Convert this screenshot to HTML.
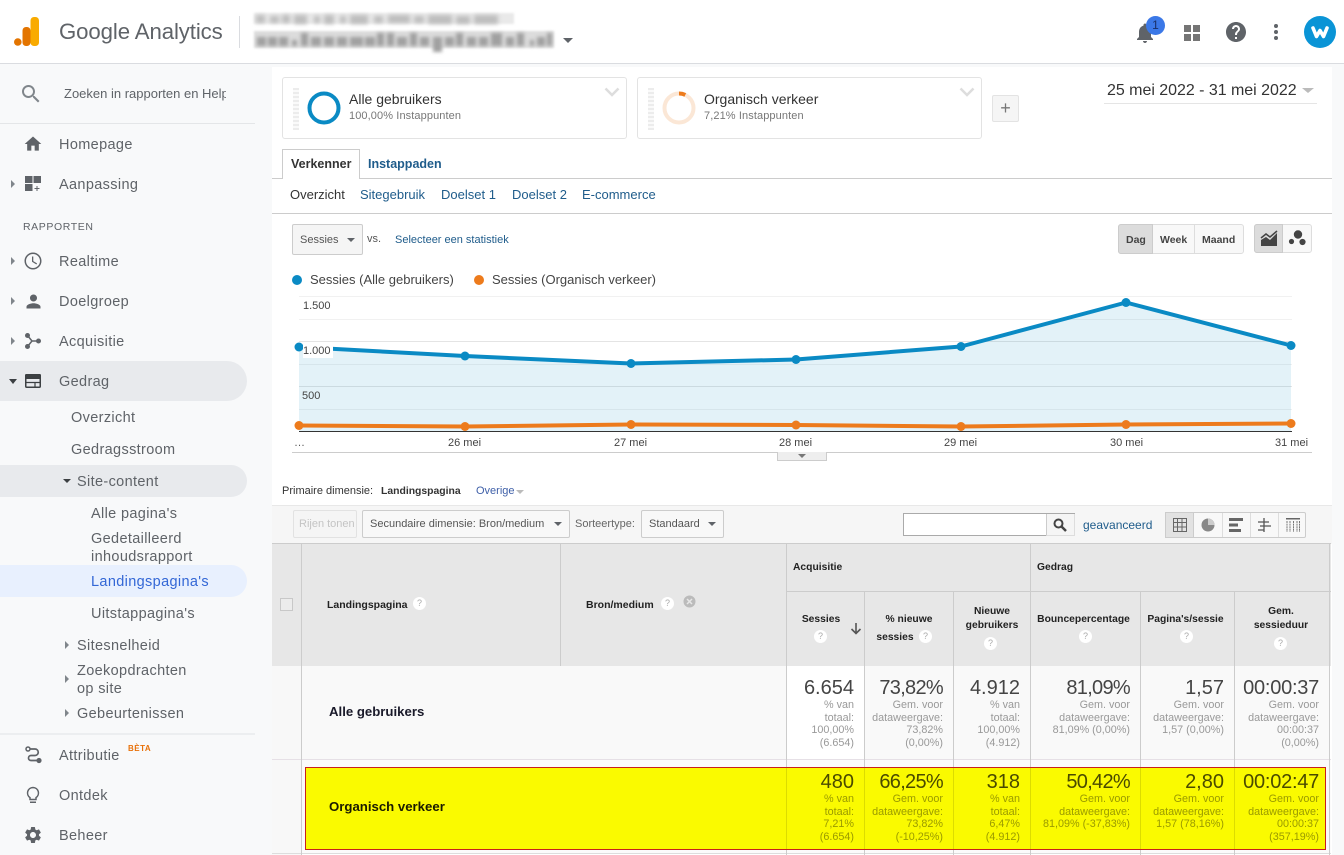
<!DOCTYPE html>
<html><head><meta charset="utf-8"><title>Google Analytics</title>
<style>
html,body{margin:0;padding:0}
body{width:1344px;height:855px;overflow:hidden;position:relative;background:#fff;font-family:"Liberation Sans",sans-serif;color:#333}
.a{position:absolute;white-space:nowrap}
.b{position:absolute;box-sizing:border-box}
.n{position:absolute;white-space:nowrap;font-size:14.5px;color:#5f6368;line-height:18px;letter-spacing:.35px;margin-top:1px}
.i{position:absolute;fill:#5f6368}
.tri{position:absolute;width:0;height:0;border-top:4px solid transparent;border-bottom:4px solid transparent;border-left:4px solid #80868b}
.dn{position:absolute;width:0;height:0;border-left:4px solid transparent;border-right:4px solid transparent;border-top:4px solid #5f6368}
.btn{position:absolute;box-sizing:border-box;border:1px solid #ccc;border-radius:2px;background:#f5f5f5;font-size:11px;color:#444;line-height:25px}
.th{position:absolute;font-size:10.3px;font-weight:bold;color:#222;text-align:center;line-height:18px}
.q{display:inline-block;width:13px;height:13px;border-radius:50%;background:#fff;color:#aaa;font-size:9px;line-height:13px;text-align:center;font-weight:normal;vertical-align:middle}
.v{position:absolute;text-align:right;font-size:20px;line-height:22px;color:#444;white-space:nowrap}
.p{letter-spacing:-.7px}
.s{position:absolute;text-align:right;font-size:10.8px;line-height:12.6px;color:#999;white-space:nowrap}
.y .s{color:#9a9a00}
.y .v{color:#4a4a00}
.vl{position:absolute;width:1px;background:#ccc}
</style></head><body>

<!-- sidebar & page backgrounds -->
<div class="b" style="left:0;top:64px;width:272px;height:791px;background:#f8f9fa"></div>
<div class="b" style="left:1332px;top:64px;width:12px;height:791px;background:#f8f9fa"></div>
<div class="b" style="left:272px;top:64px;width:1060px;height:3px;background:#f8f9fa"></div>

<!-- header -->
<div class="b" style="left:0;top:63px;width:1344px;height:1px;background:#dadce0"></div>
<svg class="b" style="left:13px;top:16px" width="28" height="32" viewBox="0 0 28 32"><rect x="17.5" y="1" width="8.5" height="29" rx="3.5" fill="#f9ab00"/><rect x="9.5" y="11" width="8" height="19" rx="3.5" fill="#e37400"/><circle cx="4.8" cy="26" r="3.8" fill="#e37400"/></svg>
<div class="a" style="left:59px;top:18px;font-size:22.2px;line-height:28px;color:#5f6368;letter-spacing:-.1px">Google Analytics</div>
<div class="b" style="left:239px;top:16px;width:1px;height:32px;background:#dadce0"></div>
<div class="b" style="left:254px;top:13px;width:260px;height:11px;background:#e9e9e9;filter:blur(1px)"></div>
<svg class="b" style="left:254px;top:10px;filter:blur(2px)" width="266" height="18"><g fill="#bdbdbd"><rect x="2" y="5" width="9" height="8"/><rect x="16" y="6" width="9" height="7"/><rect x="28" y="5" width="8" height="8"/><rect x="40" y="5" width="13" height="9"/><rect x="60" y="6" width="6" height="7"/><rect x="70" y="5" width="10" height="9"/><rect x="86" y="6" width="6" height="7"/><rect x="96" y="5" width="18" height="9"/><rect x="120" y="6" width="9" height="7"/><rect x="134" y="5" width="22" height="8"/><rect x="160" y="6" width="10" height="7"/><rect x="174" y="5" width="24" height="9"/><rect x="202" y="6" width="14" height="8"/><rect x="220" y="5" width="24" height="9"/></g></svg>
<div class="b" style="left:254px;top:31px;width:300px;height:17px;background:#dcdcdc;filter:blur(1px)"></div>
<svg class="b" style="left:254px;top:26px;filter:blur(1.8px)" width="306" height="28"><g fill="#a0a0a0"><rect x="3" y="11" width="9" height="9"/><rect x="14" y="11" width="9" height="9"/><rect x="25" y="11" width="9" height="9"/><rect x="38" y="14" width="5" height="6"/><rect x="47" y="7" width="7" height="13"/><rect x="57" y="11" width="10" height="9"/><rect x="70" y="11" width="10" height="9"/><rect x="83" y="11" width="10" height="9"/><rect x="96" y="11" width="13" height="9"/><rect x="111" y="11" width="10" height="9"/><rect x="123" y="7" width="7" height="13"/><rect x="133" y="7" width="7" height="13"/><rect x="143" y="11" width="10" height="9"/><rect x="156" y="7" width="7" height="13"/><rect x="166" y="11" width="9" height="9"/><rect x="179" y="11" width="9" height="15"/><rect x="191" y="11" width="9" height="9"/><rect x="202" y="7" width="7" height="13"/><rect x="213" y="11" width="9" height="9"/><rect x="225" y="11" width="9" height="9"/><rect x="237" y="7" width="11" height="13"/><rect x="252" y="11" width="8" height="9"/><rect x="263" y="7" width="7" height="13"/><rect x="276" y="14" width="4" height="6"/><rect x="283" y="11" width="8" height="9"/><rect x="293" y="7" width="5" height="13"/></g></svg>
<div class="dn" style="left:563px;top:38px;border-left-width:5px;border-right-width:5px;border-top-width:5px"></div>

<svg class="i" style="left:1133px;top:21px" width="24" height="24" viewBox="0 0 24 24"><path d="M12 22c1.1 0 2-.9 2-2h-4c0 1.1.9 2 2 2zm6-6v-5c0-3.07-1.63-5.64-4.5-6.32V4c0-.83-.67-1.5-1.5-1.5s-1.5.67-1.5 1.5v.68C7.64 5.36 6 7.92 6 11v5l-2 2v1h16v-1l-2-2z"/></svg>
<div class="a" style="left:1146px;top:16px;width:19px;height:19px;border-radius:50%;background:#3b78e7;color:#1a2f66;font-size:12px;line-height:18px;text-align:center">1</div>
<svg class="i" style="left:1183px;top:24px;fill:#757575" width="18" height="18" viewBox="0 0 18 18"><rect x="1" y="1" width="7" height="7"/><rect x="10" y="1" width="7" height="7"/><rect x="1" y="10" width="7" height="7"/><rect x="10" y="10" width="7" height="7"/></svg>
<svg class="i" style="left:1224px;top:20px" width="24" height="24" viewBox="0 0 24 24"><path d="M12 2C6.48 2 2 6.48 2 12s4.48 10 10 10 10-4.48 10-10S17.52 2 12 2zm1 17h-2v-2h2v2zm2.07-7.75l-.9.92C13.45 12.9 13 13.5 13 15h-2v-.5c0-1.1.45-2.1 1.17-2.83l1.24-1.26c.37-.36.59-.86.59-1.41 0-1.1-.9-2-2-2s-2 .9-2 2H8c0-2.21 1.79-4 4-4s4 1.79 4 4c0 .88-.36 1.68-.93 2.25z"/></svg>
<svg class="i" style="left:1272px;top:23px" width="8" height="18" viewBox="0 0 8 18"><circle cx="4" cy="3" r="2"/><circle cx="4" cy="9" r="2"/><circle cx="4" cy="15" r="2"/></svg>
<div class="a" style="left:1304px;top:16px;width:32px;height:32px;border-radius:50%;background:#0a94d6"></div>
<svg class="b" style="left:1304px;top:16px" width="32" height="32" viewBox="0 0 32 32"><path d="M9 12l3.500 8.500L16 14.500l3.500 6L23 12" fill="none" stroke="#fff" stroke-width="3.600" stroke-linejoin="round" stroke-linecap="round"/></svg>

<!-- sidebar -->
<svg class="i" style="left:19px;top:82px;fill:#80868b" width="24" height="24" viewBox="0 0 24 24"><path d="M15.5 14h-.79l-.28-.27C15.41 12.59 16 11.11 16 9.5 16 5.91 13.09 3 9.5 3S3 5.91 3 9.500 5.910 16 9.500 16c1.610 0 3.090-.59 4.230-1.570l.27.28v.79l5 4.990L20.490 19l-4.990-5zm-6 0C7.010 14 5 11.990 5 9.500S7.010 5 9.500 5 14 7.010 14 9.500 11.990 14 9.500 14z"/></svg>
<div class="a" style="left:64px;top:85px;width:162px;overflow:hidden;font-size:13px;line-height:18px;color:#5f6368">Zoeken in rapporten en Help</div>
<div class="b" style="left:0;top:123px;width:255px;height:1px;background:#e4e6e8"></div>

<svg class="i" style="left:23px;top:134px" width="20" height="20" viewBox="0 0 24 24"><path d="M10 20v-6h4v6h5v-8h3L12 3 2 12h3v8z"/></svg>
<div class="n" style="left:59px;top:135px">Homepage</div>
<div class="tri" style="left:11px;top:180px"></div>
<svg class="i" style="left:25px;top:176px" width="16" height="16" viewBox="0 0 16 16"><rect width="7.500" height="7"/><rect x="8.500" width="7.500" height="7"/><rect y="8" width="7.500" height="7"/><path d="M11.500 10h1v2h2v1h-2v2h-1v-2h-2v-1h2z"/></svg>
<div class="n" style="left:59px;top:175px">Aanpassing</div>
<div class="a" style="left:23px;top:220px;font-size:10.500px;line-height:14px;color:#5f6368;letter-spacing:.6px">RAPPORTEN</div>

<div class="tri" style="left:11px;top:257px"></div>
<svg class="i" style="left:21px;top:249px" width="24" height="24" viewBox="0 0 24 24"><path d="M11.990 3.500C7.300 3.500 3.500 7.310 3.500 12s3.800 8.500 8.490 8.500c4.700 0 8.510-3.810 8.510-8.500s-3.810-8.500-8.510-8.500zM12 19c-3.870 0-7-3.130-7-7s3.130-7 7-7 7 3.130 7 7-3.130 7-7 7z"/><path d="M12.300 7.500H11v5.300l4.400 2.650.65-1.050-3.750-2.230z"/></svg>
<div class="n" style="left:59px;top:252px">Realtime</div>
<div class="tri" style="left:11px;top:297px"></div>
<svg class="i" style="left:22.500px;top:290.500px" width="21" height="21" viewBox="0 0 24 24"><path d="M12 12c2.210 0 4-1.790 4-4s-1.790-4-4-4-4 1.790-4 4 1.790 4 4 4zm0 2c-2.670 0-8 1.340-8 4v2h16v-2c0-2.660-5.330-4-8-4z"/></svg>
<div class="n" style="left:59px;top:292px">Doelgroep</div>
<div class="tri" style="left:11px;top:337px"></div>
<svg class="i" style="left:25px;top:333px" width="16" height="16" viewBox="0 0 16 16"><circle cx="2.500" cy="2.500" r="2.500"/><circle cx="2.500" cy="13.500" r="2.500"/><circle cx="13.500" cy="8" r="2.500"/><path d="M2.500 2.500L7 8l-4.500 5.500M7 8h6.500" fill="none" stroke="#5f6368" stroke-width="1.500"/></svg>
<div class="n" style="left:59px;top:332px">Acquisitie</div>

<div class="b" style="left:0;top:361px;width:247px;height:40px;background:#e8eaed;border-radius:0 20px 20px 0"></div>
<div class="dn" style="left:9px;top:379px;border-left-width:4.500px;border-right-width:4.500px;border-top-width:5px;border-top-color:#3c4043"></div>
<svg class="b" style="left:25px;top:374px" width="16" height="14" viewBox="0 0 16 14"><rect x=".75" y=".75" width="14.500" height="12.500" rx="1" fill="none" stroke="#3c4043" stroke-width="1.500"/><rect x="0" y="0" width="16" height="5" rx="1.500" fill="#3c4043"/><path d="M1 8.500h14M10 8.500V13" stroke="#3c4043" stroke-width="1.200" fill="none"/></svg>
<div class="n" style="left:59px;top:372px">Gedrag</div>
<div class="n" style="left:71px;top:408px">Overzicht</div>
<div class="n" style="left:71px;top:440px">Gedragsstroom</div>
<div class="b" style="left:0;top:465px;width:247px;height:32px;background:#e8eaed;border-radius:0 16px 16px 0"></div>
<div class="dn" style="left:63px;top:479px;border-top-color:#3c4043"></div>
<div class="n" style="left:77px;top:472px">Site-content</div>
<div class="n" style="left:91px;top:504px">Alle pagina's</div>
<div class="n" style="left:91px;top:529px">Gedetailleerd</div>
<div class="n" style="left:91px;top:547px">inhoudsrapport</div>
<div class="b" style="left:0;top:565px;width:247px;height:32px;background:#e8f0fe;border-radius:0 16px 16px 0"></div>
<div class="n" style="left:91px;top:572px;color:#3367d6">Landingspagina's</div>
<div class="n" style="left:91px;top:604px">Uitstappagina's</div>
<div class="tri" style="left:65px;top:641px"></div>
<div class="n" style="left:77px;top:636px">Sitesnelheid</div>
<div class="tri" style="left:65px;top:675px"></div>
<div class="n" style="left:77px;top:661px">Zoekopdrachten</div>
<div class="n" style="left:77px;top:679px">op site</div>
<div class="tri" style="left:65px;top:709px"></div>
<div class="n" style="left:77px;top:704px">Gebeurtenissen</div>
<div class="b" style="left:0;top:733px;width:255px;height:2px;background:#eceef0"></div>
<svg class="b" style="left:25px;top:746px" width="17" height="18" viewBox="0 0 17 18"><circle cx="3" cy="3" r="2" fill="none" stroke="#5f6368" stroke-width="1.500"/><circle cx="14" cy="14.500" r="2.600" fill="#5f6368"/><path d="M5 3h5a3 3 0 0 1 0 6.500H6a2.500 2.500 0 0 0 0 5h6" fill="none" stroke="#5f6368" stroke-width="1.700"/></svg>
<div class="n" style="left:59px;top:746px">Attributie</div>
<div class="a" style="left:128px;top:743px;font-size:8px;line-height:12px;font-weight:bold;color:#e8710a;letter-spacing:.5px">BÈTA</div>
<svg class="b" style="left:25px;top:786px" width="16" height="20" viewBox="0 0 16 20"><path d="M8 1.500a5.500 5.500 0 0 0-3 10.100V13.500h6v-1.900A5.500 5.500 0 0 0 8 1.500z" fill="none" stroke="#5f6368" stroke-width="1.500"/><rect x="5" y="15.500" width="6" height="1.500" fill="#5f6368"/></svg>
<div class="n" style="left:59px;top:786px">Ontdek</div>
<svg class="i" style="left:23px;top:825px" width="20" height="20" viewBox="0 0 24 24"><path d="M19.140 12.940c.04-.3.060-.61.060-.94 0-.32-.02-.64-.07-.94l2.030-1.580c.18-.14.230-.41.120-.61l-1.920-3.320c-.12-.22-.37-.29-.59-.22l-2.390.960c-.5-.38-1.030-.7-1.620-.94l-.36-2.540c-.04-.24-.24-.41-.48-.41h-3.840c-.24 0-.43.170-.47.410l-.36 2.540c-.59.240-1.130.570-1.620.940l-2.390-.96c-.22-.08-.47 0-.59.220L2.740 8.870c-.12.210-.08.470.120.610l2.030 1.580c-.05.300-.09.630-.09.940s.020.640.070.940l-2.030 1.580c-.18.140-.23.410-.12.610l1.920 3.320c.12.220.370.290.590.220l2.390-.96c.5.380 1.030.7 1.620.94l.36 2.540c.05.240.24.410.48.410h3.840c.24 0 .44-.17.47-.41l.36-2.540c.59-.24 1.130-.56 1.620-.94l2.390.96c.22.080.47 0 .59-.22l1.920-3.320c.12-.22.070-.47-.12-.61l-2.010-1.580zM12 15.600c-1.980 0-3.600-1.620-3.600-3.600s1.620-3.600 3.600-3.600 3.600 1.620 3.600 3.600-1.620 3.600-3.600 3.600z"/></svg>
<div class="n" style="left:59px;top:826px">Beheer</div>

<!-- segment cards -->
<div class="b" style="left:282px;top:77px;width:345px;height:62px;border:1px solid #e3e3e3;border-radius:3px;background:#fff"></div>
<div class="b" style="left:293px;top:88px;width:6px;height:42px;background:repeating-linear-gradient(#ececec 0 2px,#fafafa 2px 4px)"></div>
<svg class="b" style="left:307px;top:91px" width="34" height="34"><circle cx="17" cy="17" r="14.500" fill="none" stroke="#0a8ac4" stroke-width="4"/></svg>
<div class="a" style="left:349px;top:90px;font-size:14px;line-height:18px;color:#333">Alle gebruikers</div>
<div class="a" style="left:349px;top:109px;font-size:11px;line-height:15px;color:#777;letter-spacing:.1px">100,00% Instappunten</div>
<svg class="b" style="left:604px;top:87px" width="16" height="11"><path d="M1.500 1.500L8 8l6.500-6.500" fill="none" stroke="#ddd" stroke-width="2.500"/></svg>

<div class="b" style="left:637px;top:77px;width:345px;height:62px;border:1px solid #e3e3e3;border-radius:3px;background:#fff"></div>
<div class="b" style="left:648px;top:88px;width:6px;height:42px;background:repeating-linear-gradient(#ececec 0 2px,#fafafa 2px 4px)"></div>
<svg class="b" style="left:662px;top:91px" width="34" height="34"><circle cx="17" cy="17" r="14.500" fill="none" stroke="#fbe7d6" stroke-width="4"/><path d="M17 2.500A14.500 14.500 0 0 1 23.300 3.900" fill="none" stroke="#ed7b1c" stroke-width="4"/></svg>
<div class="a" style="left:704px;top:90px;font-size:14px;line-height:18px;color:#333">Organisch verkeer</div>
<div class="a" style="left:704px;top:109px;font-size:11px;line-height:15px;color:#777;letter-spacing:.1px">7,21% Instappunten</div>
<svg class="b" style="left:959px;top:87px" width="16" height="11"><path d="M1.500 1.500L8 8l6.500-6.500" fill="none" stroke="#ddd" stroke-width="2.500"/></svg>
<div class="b" style="left:992px;top:95px;width:27px;height:27px;border:1px solid #e3e3e3;border-radius:2px;background:#f5f5f5;color:#777;font-size:18px;line-height:25px;text-align:center">+</div>

<div class="a" style="left:1107px;top:81px;font-size:16px;line-height:20px;color:#333;letter-spacing:-.03px">25 mei 2022 - 31 mei 2022</div>
<div class="dn" style="left:1302px;top:88px;border-left-width:6px;border-right-width:6px;border-top-width:5px;border-top-color:#bbb"></div>
<div class="b" style="left:1104px;top:103px;width:213px;height:1px;background:#e5e5e5"></div>

<!-- tabs -->
<div class="b" style="left:272px;top:178px;width:1060px;height:1px;background:#ccc"></div>
<div class="b" style="left:282px;top:149px;width:78px;height:30px;border:1px solid #ccc;border-bottom:0;background:#fff"></div>
<div class="a" style="left:291px;top:155px;font-size:12.500px;line-height:18px;font-weight:bold;color:#333">Verkenner</div>
<div class="a" style="left:368px;top:155px;font-size:12.500px;line-height:18px;font-weight:bold;color:#1f5c8b">Instappaden</div>
<div class="a" style="left:290px;top:186px;font-size:13px;line-height:18px;color:#333">Overzicht</div>
<div class="a" style="left:360px;top:186px;font-size:13px;line-height:18px;color:#1f5c8b">Sitegebruik</div>
<div class="a" style="left:441px;top:186px;font-size:13px;line-height:18px;color:#1f5c8b">Doelset 1</div>
<div class="a" style="left:512px;top:186px;font-size:13px;line-height:18px;color:#1f5c8b">Doelset 2</div>
<div class="a" style="left:582px;top:186px;font-size:13px;line-height:18px;color:#1f5c8b">E-commerce</div>
<div class="b" style="left:272px;top:213px;width:1060px;height:1px;background:#ccc"></div>

<!-- chart controls -->
<div class="btn" style="left:292px;top:224px;width:71px;height:31px;line-height:30px;padding-left:7px;color:#555">Sessies</div>
<div class="dn" style="left:347px;top:238px"></div>
<div class="a" style="left:367px;top:231px;font-size:11px;line-height:16px;color:#555">vs.</div>
<div class="a" style="left:395px;top:232px;font-size:11px;line-height:16px;color:#1f5c8b">Selecteer een statistiek</div>

<div class="b" style="left:1118px;top:224px;width:126px;height:30px;border:1px solid #ddd;border-radius:3px;background:#f8f8f8"></div>
<div class="b" style="left:1118px;top:224px;width:35px;height:30px;border-radius:3px 0 0 3px;background:#dcdcdc;border:1px solid #ccc"></div>
<div class="b" style="left:1194px;top:224px;width:1px;height:30px;background:#ddd"></div>
<div class="a" style="left:1126px;top:232px;font-size:10.500px;line-height:16px;font-weight:bold;color:#444">Dag</div>
<div class="a" style="left:1160px;top:232px;font-size:10.500px;line-height:16px;font-weight:bold;color:#444">Week</div>
<div class="a" style="left:1202px;top:232px;font-size:10.500px;line-height:16px;font-weight:bold;color:#444">Maand</div>
<div class="b" style="left:1254px;top:224px;width:58px;height:29px;border:1px solid #ddd;border-radius:3px;background:#f8f8f8"></div>
<div class="b" style="left:1254px;top:224px;width:29px;height:29px;border-radius:3px 0 0 3px;background:#dcdcdc;border:1px solid #ccc"></div>
<svg class="b" style="left:1260px;top:230px" width="18" height="17" viewBox="0 0 18 17"><path d="M1 16V10l5-3 4 3 7-7v13z" fill="#444"/><path d="M1 8l5-4 4 3 7-6" fill="none" stroke="#444" stroke-width="1.500"/></svg>
<svg class="b" style="left:1288px;top:229px" width="20" height="18"><circle cx="10" cy="5.500" r="4.200" fill="#444"/><circle cx="3.500" cy="12.500" r="2.600" fill="#444"/><circle cx="14.500" cy="13" r="3.100" fill="#444"/></svg>

<!-- legend -->
<div class="a" style="left:292px;top:275px;width:10px;height:10px;border-radius:50%;background:#0a8ac4"></div>
<div class="a" style="left:310px;top:271px;font-size:13px;line-height:18px;color:#444">Sessies (Alle gebruikers)</div>
<div class="a" style="left:474px;top:275px;width:10px;height:10px;border-radius:50%;background:#ed7b1c"></div>
<div class="a" style="left:492px;top:271px;font-size:13px;line-height:18px;color:#444">Sessies (Organisch verkeer)</div>

<!-- chart -->
<svg class="b" style="left:272px;top:290px" width="1060" height="175" viewBox="272 290 1060 175">
<g stroke-width="1"><path d="M299 296.500H1292M299 319.500H1292M299 364.500H1292M299 409.500H1292" stroke="#f1f1f1"/><path d="M299 341.500H1292M299 386.500H1292" stroke="#e4e4e4"/></g>
<path d="M299 347L465 356 631 363.500 796 359.500 961 346.500 1126 302.500 1291 345.500V431H299z" fill="#0a8ac4" fill-opacity=".115"/>
<path d="M299 347L465 356 631 363.500 796 359.500 961 346.500 1126 302.500 1291 345.500" fill="none" stroke="#0a8ac4" stroke-width="4" stroke-linejoin="round"/>
<g fill="#0a8ac4"><circle cx="299" cy="347" r="4.500"/><circle cx="465" cy="356" r="4.500"/><circle cx="631" cy="363.500" r="4.500"/><circle cx="796" cy="359.500" r="4.500"/><circle cx="961" cy="346.500" r="4.500"/><circle cx="1126" cy="302.500" r="4.500"/><circle cx="1291" cy="345.500" r="4.500"/></g>
<path d="M299 425.500L465 426.500 631 424.500 796 425 961 426.500 1126 424.500 1291 423.500" fill="none" stroke="#ed7b1c" stroke-width="4" stroke-linejoin="round"/>
<g fill="#ed7b1c"><circle cx="299" cy="425.500" r="4.500"/><circle cx="465" cy="426.500" r="4.500"/><circle cx="631" cy="424.500" r="4.500"/><circle cx="796" cy="425" r="4.500"/><circle cx="961" cy="426.500" r="4.500"/><circle cx="1126" cy="424.500" r="4.500"/><circle cx="1291" cy="423.500" r="4.500"/></g>
<path d="M299 431.500H1292" stroke="#333" stroke-width="1"/>
<path d="M292 452.500H1312" stroke="#ccc" stroke-width="1"/>
</svg>
<div class="a" style="left:303px;top:299px;font-size:11px;line-height:14px;color:#444;background:#fff">1.500</div>
<div class="a" style="left:303px;top:344px;font-size:11px;line-height:14px;color:#444;background:#fff;padding-right:2px">1.000</div>
<div class="a" style="left:302px;top:389px;font-size:11px;line-height:14px;color:#444">500</div>
<div class="a" style="left:294px;top:436px;font-size:11px;line-height:14px;color:#555">…</div>
<div class="a" style="left:448px;top:436px;font-size:11px;line-height:14px;color:#444">26 mei</div>
<div class="a" style="left:614px;top:436px;font-size:11px;line-height:14px;color:#444">27 mei</div>
<div class="a" style="left:779px;top:436px;font-size:11px;line-height:14px;color:#444">28 mei</div>
<div class="a" style="left:944px;top:436px;font-size:11px;line-height:14px;color:#444">29 mei</div>
<div class="a" style="left:1110px;top:436px;font-size:11px;line-height:14px;color:#444">30 mei</div>
<div class="a" style="left:1275px;top:436px;font-size:11px;line-height:14px;color:#444">31 mei</div>
<div class="b" style="left:777px;top:452px;width:50px;height:9px;background:#eee;border:1px solid #ccc;border-top:0"></div>
<div class="dn" style="left:798px;top:454px;border-left-width:4px;border-right-width:4px;border-top-color:#777"></div>

<!-- primary dimension -->
<div class="a" style="left:282px;top:483px;font-size:11px;line-height:16px;color:#333">Primaire dimensie:</div>
<div class="a" style="left:381px;top:484px;font-size:10.400px;line-height:16px;font-weight:bold;color:#333">Landingspagina</div>
<div class="a" style="left:476px;top:483px;font-size:11px;line-height:16px;color:#3e5fa8">Overige</div>
<div class="dn" style="left:516px;top:490px;border-top-color:#bbb"></div>

<!-- toolbar -->
<div class="b" style="left:272px;top:505px;width:1060px;height:39px;background:#f6f6f6;border-top:1px solid #e8e8e8"></div>
<div class="btn" style="left:293px;top:510px;width:64px;height:28px;color:#c4c4c4;border-color:#e2e2e2;padding-left:5px;line-height:27px">Rijen tonen</div>
<div class="btn" style="left:362px;top:510px;width:208px;height:28px;padding-left:7px;line-height:26px;background:#f8f8f8;color:#555">Secundaire dimensie: Bron/medium</div>
<div class="dn" style="left:554px;top:522px"></div>
<div class="a" style="left:575px;top:517px;font-size:11px;line-height:15px;color:#666">Sorteertype:</div>
<div class="btn" style="left:641px;top:510px;width:83px;height:28px;padding-left:7px;line-height:26px;background:#f8f8f8;color:#555">Standaard</div>
<div class="dn" style="left:708px;top:522px"></div>
<div class="b" style="left:903px;top:513px;width:172px;height:23px;border:1px solid #aaa;background:#fff"></div>
<div class="b" style="left:1046px;top:514px;width:29px;height:22px;background:#f5f5f5;border-left:1px solid #ccc;border-right:1px solid #ddd;border-bottom:1px solid #ddd"></div>
<svg class="b" style="left:1052px;top:517px" width="16" height="16"><circle cx="6.500" cy="6.500" r="4" fill="none" stroke="#444" stroke-width="2"/><path d="M9.500 9.500L14 14" stroke="#444" stroke-width="2.500"/></svg>
<div class="a" style="left:1083px;top:517px;font-size:12px;line-height:16px;color:#1f5c8b">geavanceerd</div>
<div class="b" style="left:1165px;top:512px;width:141px;height:26px;border:1px solid #ccc;border-radius:2px;background:#f8f8f8"></div>
<div class="b" style="left:1165px;top:512px;width:29px;height:26px;background:#e2e2e2;border:1px solid #ccc"></div>
<div class="b" style="left:1222px;top:513px;width:1px;height:24px;background:#ddd"></div>
<div class="b" style="left:1250px;top:513px;width:1px;height:24px;background:#ddd"></div>
<div class="b" style="left:1278px;top:513px;width:1px;height:24px;background:#ddd"></div>
<svg class="b" style="left:1173px;top:518px" width="14" height="14"><path d="M.5.500h13v13H.5zM.5 4.500h13M.5 9h13M4.500.500v13M9 .500v13" fill="none" stroke="#666"/></svg>
<svg class="b" style="left:1201px;top:518px" width="14" height="14"><circle cx="7" cy="7" r="6.500" fill="#888"/><path d="M7 7V.5A6.500 6.500 0 0 1 13.500 7z" fill="#ccc"/></svg>
<svg class="b" style="left:1229px;top:518px" width="14" height="14"><path d="M0 0h14v3H0zM0 5.500h9v3H0zM0 11h12v3H0z" fill="#666"/></svg>
<svg class="b" style="left:1257px;top:518px" width="14" height="14"><path d="M7 0v14M1 4h11M3 8h11M1 12h6" fill="none" stroke="#555" stroke-width="1.300"/></svg>
<svg class="b" style="left:1285px;top:518px" width="16" height="14"><path d="M1 0h14v1.500H1z" fill="#666"/><path d="M2 3v11M5 3v11M8.500 3v11M12 3v11M14.500 3v11" stroke="#777" stroke-dasharray="2 .6"/></svg>

<!-- table backgrounds -->
<div class="b" style="left:272px;top:543px;width:1059px;height:123px;background:#e7e7e7;border-top:1px solid #ccc"></div>
<div class="b" style="left:272px;top:666px;width:29px;height:189px;background:#f8f8f8"></div>
<div class="b" style="left:302px;top:666px;width:484px;height:93px;background:#f9f9f9"></div>
<div class="b" style="left:865px;top:666px;width:465px;height:93px;background:#f9f9f9"></div>
<div class="b" style="left:272px;top:759px;width:1059px;height:1px;background:#e6e0e6"></div>
<div class="b" style="left:302px;top:760px;width:1029px;height:94px;background:#fbfbfb"></div>
<div class="b" style="left:272px;top:853px;width:1059px;height:1px;background:#ddd"></div>

<!-- table lines -->
<div class="vl" style="left:301px;top:544px;height:311px"></div>
<div class="vl" style="left:560px;top:544px;height:122px"></div>
<div class="vl" style="left:786px;top:544px;height:311px"></div>
<div class="vl" style="left:864px;top:592px;height:263px"></div>
<div class="vl" style="left:953px;top:592px;height:263px"></div>
<div class="vl" style="left:1030px;top:544px;height:311px"></div>
<div class="vl" style="left:1140px;top:592px;height:263px"></div>
<div class="vl" style="left:1234px;top:592px;height:263px"></div>
<div class="vl" style="left:1329px;top:544px;height:311px"></div>
<div class="b" style="left:786px;top:591px;width:545px;height:1px;background:#ccc"></div>

<div class="b" style="left:280px;top:598px;width:13px;height:13px;border:1px solid #c8c8c8;background:#ececec"></div>
<div class="a" style="left:327px;top:597px;font-size:10.500px;line-height:16px;font-weight:bold;color:#222">Landingspagina</div>
<div class="q a" style="left:413px;top:597px">?</div>
<div class="a" style="left:586px;top:597px;font-size:10.500px;line-height:16px;font-weight:bold;color:#222">Bron/medium</div>
<div class="q a" style="left:661px;top:597px">?</div>
<svg class="b" style="left:683px;top:595px" width="13" height="13"><circle cx="6.500" cy="6.500" r="6" fill="#bbb"/><path d="M4 4l5 5M9 4l-5 5" stroke="#e7e7e7" stroke-width="1.500"/></svg>

<div class="a" style="left:793px;top:560px;font-size:10.300px;line-height:16px;font-weight:bold;color:#222">Acquisitie</div>
<div class="a" style="left:1037px;top:560px;font-size:10.300px;line-height:16px;font-weight:bold;color:#222">Gedrag</div>

<div class="th" style="left:787px;width:68px;top:611px">Sessies</div>
<div class="q a" style="left:814px;top:630px">?</div>
<svg class="b" style="left:850px;top:622px" width="12" height="13"><path d="M6 1v10M1.500 7L6 11.500 10.500 7" fill="none" stroke="#555" stroke-width="1.600"/></svg>
<div class="th" style="left:865px;width:88px;top:611px">% nieuwe</div>
<div class="th" style="left:865px;width:60px;top:629px">sessies</div>
<div class="q a" style="left:919px;top:630px">?</div>
<div class="th" style="left:954px;width:76px;top:605px;line-height:13.500px">Nieuwe<br>gebruikers</div>
<div class="q a" style="left:984px;top:637px">?</div>
<div class="th" style="left:1031px;width:105px;top:611px">Bouncepercentage</div>
<div class="q a" style="left:1079px;top:630px">?</div>
<div class="th" style="left:1141px;width:89px;top:611px">Pagina's/sessie</div>
<div class="q a" style="left:1180px;top:630px">?</div>
<div class="th" style="left:1235px;width:92px;top:605px;line-height:13.500px">Gem.<br>sessieduur</div>
<div class="q a" style="left:1274px;top:637px">?</div>

<!-- rows -->
<div class="a" style="left:329px;top:703px;font-size:13.200px;line-height:18px;font-weight:bold;color:#1a1a2a">Alle gebruikers</div>

<div class="v" style="right:490px;top:677px">6.654</div>
<div class="s" style="right:490px;top:699px">% van<br>totaal:<br>100,00%<br>(6.654)</div>
<div class="v p" style="right:401px;top:677px">73,82%</div>
<div class="s" style="right:401px;top:699px">Gem. voor<br>dataweergave:<br>73,82%<br>(0,00%)</div>
<div class="v" style="right:324px;top:677px">4.912</div>
<div class="s" style="right:324px;top:699px">% van<br>totaal:<br>100,00%<br>(4.912)</div>
<div class="v p" style="right:214px;top:677px">81,09%</div>
<div class="s" style="right:214px;top:699px">Gem. voor<br>dataweergave:<br>81,09% (0,00%)</div>
<div class="v" style="right:120px;top:677px">1,57</div>
<div class="s" style="right:120px;top:699px">Gem. voor<br>dataweergave:<br>1,57 (0,00%)</div>
<div class="v" style="right:25px;top:677px;letter-spacing:-.25px">00:00:37</div>
<div class="s" style="right:25px;top:699px">Gem. voor<br>dataweergave:<br>00:00:37<br>(0,00%)</div>

<!-- highlighted row -->
<div class="b" style="left:305px;top:767px;width:1021px;height:83px;background:#fafa00;border:1px solid #c8201c"></div>
<div class="vl" style="left:786px;top:768px;height:81px;background:#dcdc00"></div>
<div class="vl" style="left:864px;top:768px;height:81px;background:#dcdc00"></div>
<div class="vl" style="left:953px;top:768px;height:81px;background:#dcdc00"></div>
<div class="vl" style="left:1030px;top:768px;height:81px;background:#dcdc00"></div>
<div class="vl" style="left:1140px;top:768px;height:81px;background:#dcdc00"></div>
<div class="vl" style="left:1234px;top:768px;height:81px;background:#dcdc00"></div>
<div class="a" style="left:329px;top:798px;font-size:13.200px;line-height:18px;font-weight:bold;color:#1a1a00">Organisch verkeer</div>
<div class="y">
<div class="v" style="right:490px;top:771px">480</div>
<div class="s" style="right:490px;top:793px">% van<br>totaal:<br>7,21%<br>(6.654)</div>
<div class="v p" style="right:401px;top:771px">66,25%</div>
<div class="s" style="right:401px;top:793px">Gem. voor<br>dataweergave:<br>73,82%<br>(-10,25%)</div>
<div class="v" style="right:324px;top:771px">318</div>
<div class="s" style="right:324px;top:793px">% van<br>totaal:<br>6,47%<br>(4.912)</div>
<div class="v p" style="right:214px;top:771px">50,42%</div>
<div class="s" style="right:214px;top:793px">Gem. voor<br>dataweergave:<br>81,09% (-37,83%)</div>
<div class="v" style="right:120px;top:771px">2,80</div>
<div class="s" style="right:120px;top:793px">Gem. voor<br>dataweergave:<br>1,57 (78,16%)</div>
<div class="v" style="right:25px;top:771px;letter-spacing:-.25px">00:02:47</div>
<div class="s" style="right:25px;top:793px">Gem. voor<br>dataweergave:<br>00:00:37<br>(357,19%)</div>
</div>
</body></html>
